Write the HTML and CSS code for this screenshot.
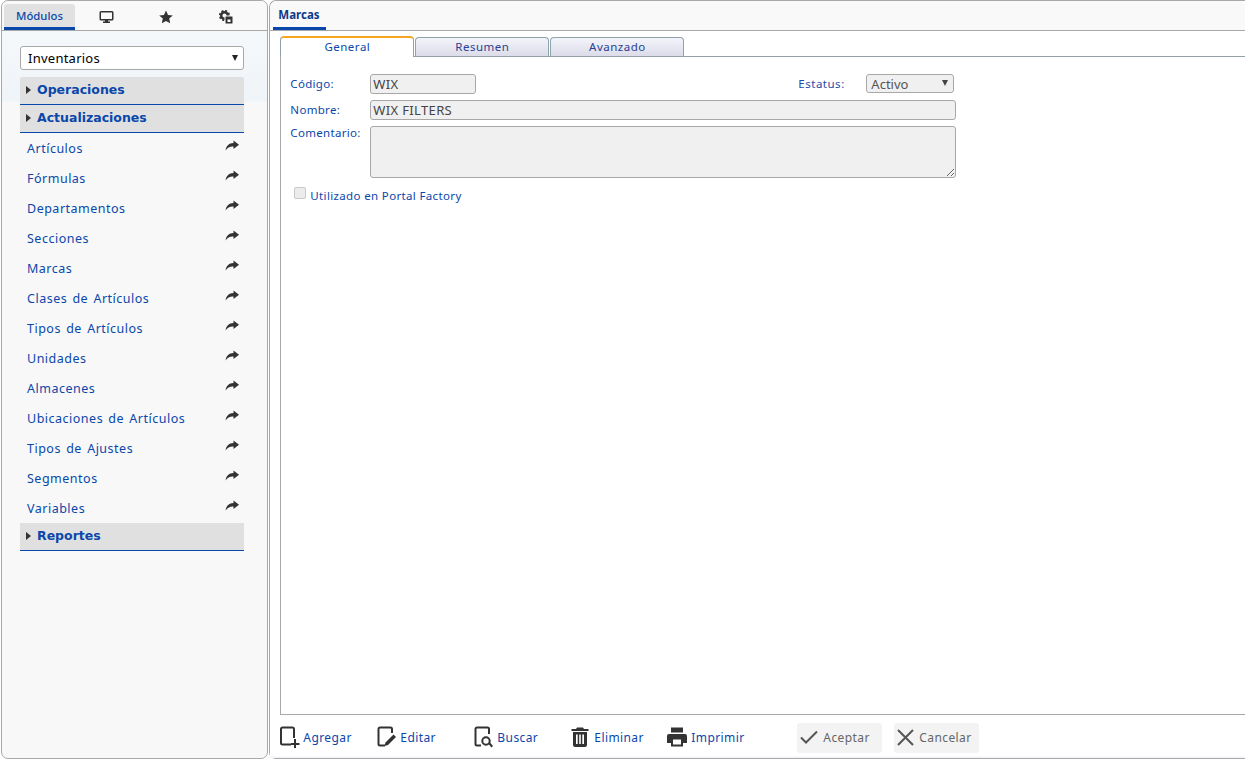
FILE: index.html
```html
<!DOCTYPE html>
<html>

	<head>
		<meta charset="UTF-8">
		<title>Marcas</title>
		<link rel="stylesheet" href="styles.css">
	</head>

	<body>
		<svg class="defs">
			<symbol id="share" viewBox="0 0 14 12">
				<path d="M8.5 0.5 L14 4.8 L8.5 9 V6.4 C5 6.2 2.4 7.6 0.6 10.6 C1 6 3.8 3 8.5 2.9 Z" />
			</symbol>
		</svg>
		<div class="page">
			<div class="panel side">
				<div class="tabbar">
					<div class="tab tab-on">Módulos</div>
					<div class="tab-icon">
						<svg width="15" height="14" viewBox="0 0 15 14"><path d="M2 1h11a1.500 1.500 0 0 1 1.500 1.500v6.500a1.500 1.500 0 0 1-1.500 1.500h-4v1h2v1.500h-7v-1.500h2v-1h-4a1.500 1.500 0 0 1-1.500-1.500v-6.500a1.500 1.500 0 0 1 1.500-1.500zM2 2.500v6.500h11v-6.500z" fill-rule="evenodd" /></svg>
					</div>
					<div class="tab-icon">
						<svg width="14" height="14" viewBox="0 0 14 14"><path d="M7 0.500l2 4.400 4.800.5-3.600 3.200 1 4.700-4.200-2.400-4.200 2.400 1-4.700-3.600-3.200 4.800-.5z" /></svg>
					</div>
					<div class="tab-icon">
						<svg width="14" height="14" viewBox="0 0 14 14">
							<circle cx="5.500" cy="5.500" r="3.300" fill="none" stroke="#333" stroke-width="2.400" />
							<circle cx="5.500" cy="5.500" r="4.800" fill="none" stroke="#333" stroke-width="1.600" stroke-dasharray="2.100 1.670" />
							<rect x="6" y="6" width="8" height="8" rx="1" fill="#333" stroke="#f9f9f9" />
							<rect x="8.500" y="9.500" width="3" height="2.500" fill="#f9f9f9" />
						</svg>
					</div>
				</div>
				<div class="side-body">
					<div class="combo">
						<select class="combo-select">
							<option>Inventarios</option>
						</select>
						<span class="combo-arrow"></span>
					</div>
					<div class="group"><span class="caret"></span>Operaciones</div>
					<div class="group"><span class="caret"></span>Actualizaciones</div>
					<a class="item">Artículos<svg width="14" height="12"><use href="#share" /></svg></a>
					<a class="item">Fórmulas<svg width="14" height="12"><use href="#share" /></svg></a>
					<a class="item">Departamentos<svg width="14" height="12"><use href="#share" /></svg></a>
					<a class="item">Secciones<svg width="14" height="12"><use href="#share" /></svg></a>
					<a class="item">Marcas<svg width="14" height="12"><use href="#share" /></svg></a>
					<a class="item">Clases de Artículos<svg width="14" height="12"><use href="#share" /></svg></a>
					<a class="item">Tipos de Artículos<svg width="14" height="12"><use href="#share" /></svg></a>
					<a class="item">Unidades<svg width="14" height="12"><use href="#share" /></svg></a>
					<a class="item">Almacenes<svg width="14" height="12"><use href="#share" /></svg></a>
					<a class="item">Ubicaciones de Artículos<svg width="14" height="12"><use href="#share" /></svg></a>
					<a class="item">Tipos de Ajustes<svg width="14" height="12"><use href="#share" /></svg></a>
					<a class="item">Segmentos<svg width="14" height="12"><use href="#share" /></svg></a>
					<a class="item">Variables<svg width="14" height="12"><use href="#share" /></svg></a>
					<div class="group"><span class="caret"></span>Reportes</div>
				</div>
			</div>

			<div class="panel main">
				<div class="tabbar tabbar-main">
					<div class="tab-title">Marcas</div>
				</div>
				<div class="main-body">
					<div class="subtabs">
						<div class="subtab subtab-on">General</div>
						<div class="subtab">Resumen</div>
						<div class="subtab">Avanzado</div>
					</div>
					<div class="sheet">
						<div class="row">
							<label class="lbl">Código:</label>
							<input class="field field-code" value="WIX" disabled />
							<label class="lbl lbl-status">Estatus:</label>
							<div class="combo combo-status">
								<select class="combo-select" disabled>
									<option>Activo</option>
								</select>
								<span class="combo-arrow"></span>
							</div>
						</div>
						<div class="row">
							<label class="lbl">Nombre:</label>
							<input class="field field-name" value="WIX FILTERS" disabled />
						</div>
						<div class="row">
							<label class="lbl lbl-note">Comentario:</label>
							<textarea class="field field-note" disabled></textarea>
						</div>
						<div class="check-row">
							<input type="checkbox" class="check" disabled />
							<label class="lbl-check">Utilizado en Portal Factory</label>
						</div>
					</div>
					<div class="toolbar">
						<a class="action act-add">
							<svg width="20" height="22" viewBox="0 0 20 22"><path d="M14 12V3a1.500 1.500 0 0 0-1.500-1.500H2.500A1.500 1.500 0 0 0 1 3v14a1.500 1.500 0 0 0 1.500 1.500H11" fill="none" stroke="#333" stroke-width="2" /><path d="M14 13h2v4h3.500v2H16v3h-2v-3h-3v-2h3z" /></svg>
							Agregar
						</a>
						<a class="action act-edit">
							<svg width="20" height="22" viewBox="0 0 20 22"><path d="M15 7V3a1.500 1.500 0 0 0-1.500-1.500H3A1.500 1.500 0 0 0 1.500 3v15A1.500 1.500 0 0 0 3 19.500h5" fill="none" stroke="#333" stroke-width="2" /><path d="M16.500 8.500l2.500 2.500-8 8-3.500 1 1-3.500z" /></svg>
							Editar
						</a>
						<a class="action act-find">
							<svg width="20" height="22" viewBox="0 0 20 22"><path d="M15 8V3a1.500 1.500 0 0 0-1.500-1.500H3A1.500 1.500 0 0 0 1.500 3v15A1.500 1.500 0 0 0 3 19.500h4" fill="none" stroke="#333" stroke-width="2" /><circle cx="12" cy="15" r="3.700" fill="none" stroke="#333" stroke-width="2" /><path d="M14.500 18l1.500-1.500 3 3.500-1.500 1.500z" /></svg>
							Buscar
						</a>
						<a class="action act-del">
							<svg width="18" height="20" viewBox="0 0 18 20"><path d="M6 0.500h6l1 1.500h4.500v2H0.500v-2H5zM2 5h14v13a2 2 0 0 1-2 2H4a2 2 0 0 1-2-2zM5 7.500v9.500h1.700V7.500zM8.200 7.500v9.500h1.600V7.500zM11.300 7.500v9.500H13V7.500z" fill-rule="evenodd" /></svg>
							Eliminar
						</a>
						<a class="action act-print">
							<svg width="20" height="20" viewBox="0 0 20 20"><path d="M4 0.500h12v5H4zM2 7h16a2 2 0 0 1 2 2v7h-4v3.500H4V16H0V9a2 2 0 0 1 2-2zM6 12.500v5h8v-5z" fill-rule="evenodd" /></svg>
							Imprimir
						</a>
						<a class="btn btn-ok">
							<svg width="18" height="14" viewBox="0 0 18 14"><path d="M1 7.500l5 5L17 1.500" fill="none" stroke="#555" stroke-width="2" /></svg>
							Aceptar
						</a>
						<a class="btn">
							<svg width="17" height="17" viewBox="0 0 17 17"><path d="M1 1l15 15M16 1L1 16" fill="none" stroke="#555" stroke-width="2" /></svg>
							Cancelar
						</a>
					</div>
				</div>
			</div>
		</div>
	</body>

</html>
```
FILE: styles.css
```css
* {
	margin: 0;
	box-sizing: border-box;
}

body {
	font-family: "Noto Sans", "Open Sans", sans-serif;
	font-size: 12px;
	letter-spacing: 0.5px;
	color: #0a47ab;
	background: #fff;
}

.defs {
	display: none;
}

.page {
	width: 1245px;
	height: 759px;
	display: flex;
	gap: 1px;
	padding-left: 1px;
	overflow: hidden;
}

.panel {
	height: 759px;
	border: 1px solid #a8a8a8;
	border-radius: 7px;
	display: flex;
	flex-direction: column;
}

.side {
	width: 268px;
	background: linear-gradient(#f5f8fb 30px, #eff4f8 100px, #f8f8f8 101px);
}

.main {
	width: 978px;
	border-right: 0;
	border-radius: 7px 0 0 7px;
	background: #fff;
}

/* barra de pestañas */
.tabbar {
	height: 30px;
	flex: none;
	display: flex;
	align-items: flex-end;
	padding: 0 0 0 2px;
	border-bottom: 1px solid #a8a8a8;
	background: #f9f9f9;
	border-radius: 7px 7px 0 0;
}

.tab {
	width: 71px;
	height: 26px;
	margin-right: 1px;
	padding-top: 4px;
	text-align: center;
	font-size: 11.300px;
	letter-spacing: 0;
	font-weight: 500;
	background: #e1e1e1;
	border-bottom: 3px solid #0a47ab;
	border-radius: 3px 3px 0 0;
}

.tab-icon {
	width: 60px;
	height: 26px;
	display: flex;
	justify-content: center;
	align-items: center;
	fill: #333;
}

.tabbar-main {
	padding-left: 2px;
}

.tab-title {
	width: 53px;
	height: 26px;
	margin-left: 1px;
	padding: 3px 0 0 5px;
	font-size: 11.500px;
	font-weight: 700;
	letter-spacing: 0;
	color: #0d3a8c;
	border-bottom: 3px solid #0a47ab;
}

/* menu lateral */
.side-body {
	padding: 15px 23px 0 18px;
}

.combo {
	position: relative;
	height: 24px;
}

.combo-select {
	appearance: none;
	width: 100%;
	height: 100%;
	padding: 0 0 0 7px;
	font-family: inherit;
	font-size: 13px;
	letter-spacing: 0.25px;
	color: #000;
	background: #fff;
	border: 1px solid #a8a8a8;
	border-radius: 3px;
	opacity: 1;
}

.combo-arrow {
	position: absolute;
	top: 9px;
	right: 6px;
	border: 3.500px solid transparent;
	border-top: 6px solid #222;
	border-bottom: 0;
}

.group {
	height: 28px;
	display: flex;
	align-items: center;
	padding: 0 0 2px 6px;
	font-family: "DejaVu Sans", sans-serif;
	font-size: 12.500px;
	font-weight: 700;
	letter-spacing: 0;
	background: #e0e0e0;
	border-bottom: 1px solid #0a47ab;
}

.combo + .group {
	margin-top: 7px;
	border-radius: 2px 2px 0 0;
}

.caret {
	margin-right: 6px;
	border: 4px solid transparent;
	border-left: 5px solid #333;
	border-right: 0;
}

.item {
	height: 30px;
	display: flex;
	justify-content: space-between;
	padding: 7px 5px 0 7px;
	font-size: 12.500px;
	word-spacing: 1.500px;
}

.item svg {
	fill: #333;
}

/* contenido */
.main-body {
	flex: 1;
	display: flex;
	flex-direction: column;
	padding: 4px 0 0 10px;
	background: linear-gradient(#fff 725px, #f1f5f9 726px);
}

.subtabs {
	height: 21px;
	flex: none;
	display: flex;
	align-items: flex-end;
	gap: 1px;
}

.subtab {
	width: 134px;
	height: 19px;
	text-align: center;
	font-size: 11.500px;
	line-height: 18px;
	color: #2a3f8f;
	background: linear-gradient(#f4f4fb, #dcdcea);
	border: 1px solid #8fa3ad;
	border-bottom: 0;
	border-radius: 4px 4px 0 0;
}

.subtab-on {
	height: 21px;
	margin-bottom: -1px;
	position: relative;
	line-height: 17px;
	color: #0a47ab;
	background: #fff;
	border-top: 2px solid #f5a623;
}

.sheet {
	height: 659px;
	flex: none;
	padding: 17px 0 0 9px;
	border: 1px solid #a8a8a8;
	border-top-color: #98a2a6;
	border-right: 0;
}

.row {
	display: flex;
	margin-bottom: 6px;
}

.lbl {
	width: 80px;
	padding-top: 2px;
	font-size: 11.500px;
	letter-spacing: 0.3px;
}

.lbl-note {
	padding-top: 0;
	line-height: 14px;
}

.lbl-status {
	width: 68px;
	margin-left: 322px;
	letter-spacing: 0.5px;
	color: #1f4aa8;
}

.field {
	font-family: inherit;
	font-size: 13px;
	letter-spacing: 0.35px;
	color: #444;
	padding: 0 2px;
	height: 20px;
	background: #f0f0f0;
	border: 1px solid #a8a8a8;
	border-radius: 3px;
	opacity: 1;
}

.field-code {
	width: 106px;
}

.field-name {
	width: 586px;
}

.field-note {
	width: 586px;
	height: 52px;
	display: block;
}

.combo-status {
	width: 88px;
	height: 19px;
}

.combo-status .combo-select {
	padding: 0 0 2px 4px;
	color: #555;
	background: #f0f0f0;
	letter-spacing: 0;
}

.combo-status .combo-arrow {
	top: 6px;
	right: 6px;
	border-top-color: #444;
}

.check-row {
	display: flex;
	margin: 9px 0 0 4px;
}

.check {
	width: 12px;
	height: 12px;
	appearance: none;
	background: #ececec;
	border: 1px solid #c8c8c8;
	border-radius: 2px;
}

.lbl-check {
	margin-left: 4px;
	line-height: 18px;
	font-size: 11.500px;
	letter-spacing: 0.35px;
}

/* botones */
.toolbar {
	height: 41px;
	flex: none;
	display: flex;
	align-items: center;
	padding-top: 3px;
	font-size: 12px;
	letter-spacing: 0.4px;
}

.action, .btn {
	display: flex;
	align-items: center;
	gap: 3px;
	fill: #333;
}

.action {
	width: 97px;
}

.act-del {
	width: 96px;
	gap: 5px;
}

.act-print {
	width: 130px;
	gap: 4px;
}

.btn {
	width: 85px;
	height: 30px;
	margin: 1px 12px 0 0;
	padding: 0 0 1px 3px;
	gap: 5px;
	color: #666;
	background: #f3f3f3;
	border-radius: 3px;
}
```
